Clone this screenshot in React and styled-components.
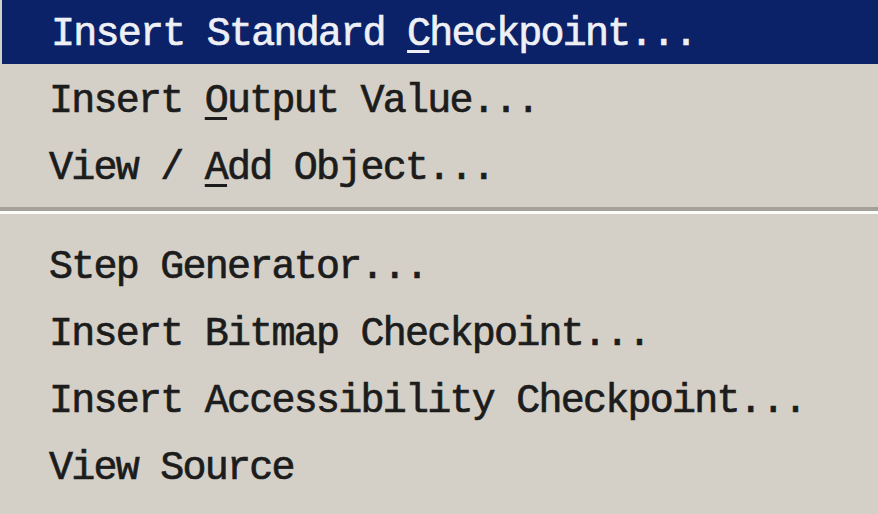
import React from 'react';
import styled, { createGlobalStyle } from 'styled-components';

const GlobalStyle = createGlobalStyle`
  html, body {
    margin: 0;
    padding: 0;
    background: #d4d0c8;
    overflow: hidden;
  }
`;

const items = [
  { label: 'Insert Standard Checkpoint...', key: 16, active: true },
  { label: 'Insert Output Value...', key: 7 },
  { label: 'View / Add Object...', key: 7 },
  { separator: true },
  { label: 'Step Generator...' },
  { label: 'Insert Bitmap Checkpoint...' },
  { label: 'Insert Accessibility Checkpoint...' },
  { label: 'View Source' },
];

export default function App() {
  return (
    <>
      <GlobalStyle />
      <StyledMenu>
        {items.map((item, i) =>
          item.separator ? (
            <Separator key={i} />
          ) : (
            <MenuItem key={i} $active={item.active}>
              {item.key !== undefined ? (
                <>
                  {item.label.slice(0, item.key)}
                  <Mnemonic>{item.label[item.key]}</Mnemonic>
                  {item.label.slice(item.key + 1)}
                </>
              ) : (
                item.label
              )}
            </MenuItem>
          )
        )}
      </StyledMenu>
    </>
  );
}

const StyledMenu = styled.div`
  display: flex;
  flex-direction: column;
  width: 878px;
  height: 514px;
  margin-top: -3px;
  background: #d4d0c8;
  font-family: 'Liberation Mono', 'Courier New', monospace;
  font-weight: normal;
  font-size: 40px;
  letter-spacing: -1.75px;
  -webkit-text-stroke: 0.7px currentColor;
`;

const MenuItem = styled.div`
  height: 67px;
  box-sizing: border-box;
  padding: 8px 0 0 49px;
  line-height: 59px;
  white-space: pre;
  color: ${(p) => (p.$active ? '#eef0f6' : '#1c1c1c')};
  background: ${(p) => (p.$active ? '#0b2268' : 'transparent')};
  margin-left: ${(p) => (p.$active ? '2px' : '0')};
`;

const Mnemonic = styled.span`
  text-decoration: underline;
  text-decoration-thickness: 3px;
  text-underline-offset: 5px;
`;

const Separator = styled.div`
  height: 32px;
  box-sizing: border-box;
  padding-top: 9px;

  &::before {
    content: '';
    display: block;
    height: 4px;
    background: #a4a09a;
    border-bottom: 3px solid #fbfbf8;
  }
`;
